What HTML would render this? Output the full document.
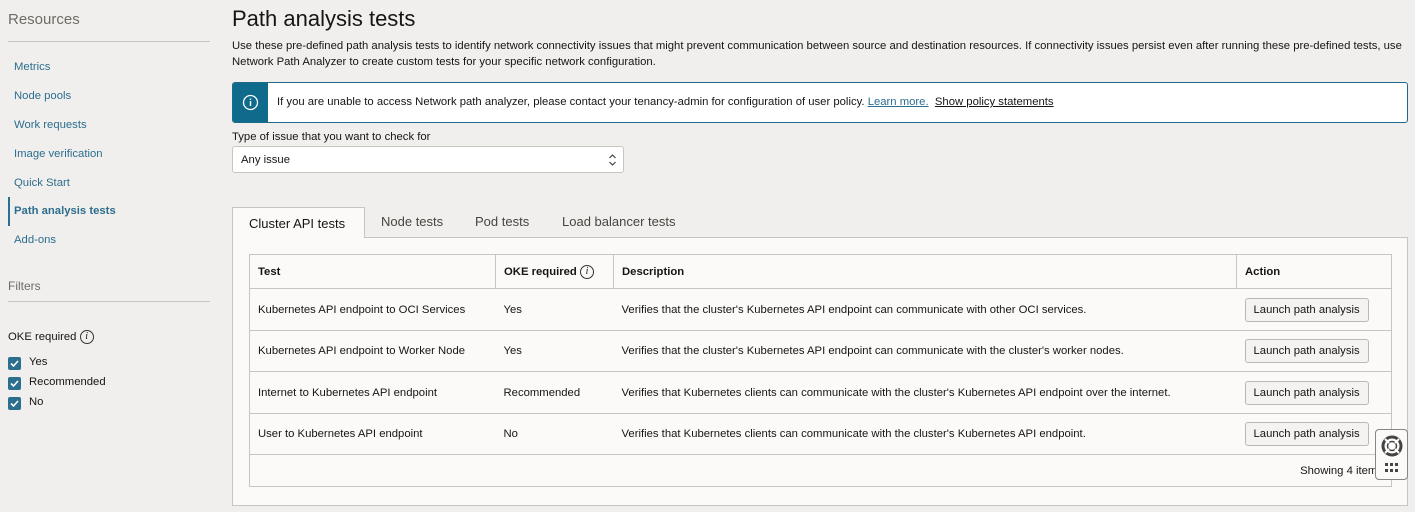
<!DOCTYPE html>
<html><head><style>
*{box-sizing:border-box;margin:0;padding:0}
body{width:1415px;height:512px;overflow:hidden;background:#f1efed;font-family:"Liberation Sans",sans-serif;color:#161513;position:relative;font-size:11.3px}
.a{position:absolute}
.nav a{position:absolute;left:14px;color:#2c6e8e;font-size:11.3px;text-decoration:none}
.cb{position:absolute;left:8px;width:13px;height:13px;background:#2c6e8e;border-radius:2px}
.cb svg{position:absolute;left:1px;top:1px}
table{border-collapse:collapse;position:absolute;left:249px;top:254px;width:1143px;background:#fbfaf9;border:1px solid #c8c4bf}
td,th{border-bottom:1px solid #c8c4bf;text-align:left;padding:1px 8px 0;font-size:11.3px;vertical-align:middle}
th{height:34px;border-right:1px solid #c8c4bf;font-weight:bold}
td{height:41.5px}
.btn{display:inline-block;border:1px solid #bcb7b1;background:#f4f3f1;border-radius:3px;padding:5px 8px;font-size:11.3px}
.info{display:inline-block;width:14px;height:14px;border:1px solid #333;border-radius:50%;font-style:italic;font-family:"Liberation Serif",serif;font-size:10px;text-align:center;line-height:12px;vertical-align:middle}
</style></head><body>
<div class="a" style="left:8px;top:11px;font-size:15px;color:#6f6b66">Resources</div>
<div class="a" style="left:8px;top:41px;width:202px;height:1px;background:#c8c4bf"></div>
<div class="nav">
<a style="top:61px">Metrics</a><a style="top:90px">Node pools</a><a style="top:119px">Work requests</a><a style="top:148px">Image verification</a><a style="top:177px">Quick Start</a><a style="top:205px;font-weight:bold">Path analysis tests</a><a style="top:234px">Add-ons</a>
</div>
<div class="a" style="left:8px;top:197px;width:2px;height:29px;background:#2c6e8e"></div>
<div class="a" style="left:8px;top:279px;font-size:12px;color:#6f6b66">Filters</div>
<div class="a" style="left:8px;top:301px;width:202px;height:1px;background:#c8c4bf"></div>
<div class="a" style="left:8px;top:330px">OKE required <span class="info">i</span></div>
<div class="cb" style="top:357px"><svg width="11" height="11"><path d="M2 5.5l2.5 2.5 4.5-5" stroke="#fff" stroke-width="1.6" fill="none"/></svg></div>
<div class="a" style="left:29px;top:356px">Yes</div>
<div class="cb" style="top:377px"><svg width="11" height="11"><path d="M2 5.5l2.5 2.5 4.5-5" stroke="#fff" stroke-width="1.6" fill="none"/></svg></div>
<div class="a" style="left:29px;top:376px">Recommended</div>
<div class="cb" style="top:397px"><svg width="11" height="11"><path d="M2 5.5l2.5 2.5 4.5-5" stroke="#fff" stroke-width="1.6" fill="none"/></svg></div>
<div class="a" style="left:29px;top:396px">No</div>

<div class="a" style="left:232px;top:6px;font-size:22px;color:#161513">Path analysis tests</div>
<div class="a" style="left:232px;top:38px;width:1180px;line-height:16px">Use these pre-defined path analysis tests to identify network connectivity issues that might prevent communication between source and destination resources. If connectivity issues persist even after running these pre-defined tests, use Network Path Analyzer to create custom tests for your specific network configuration.</div>
<div class="a" style="left:232px;top:82px;width:1176px;height:41px;background:#fff;border:1px solid #1e6a8a;border-radius:3px;overflow:hidden">
<div class="a" style="left:0;top:0;width:35px;height:41px;background:#0f6a8c"></div>
<svg class="a" style="left:9px;top:11px" width="17" height="17"><circle cx="8.5" cy="8.5" r="7" stroke="#fff" stroke-width="1.3" fill="none"/><rect x="7.8" y="7" width="1.4" height="5" fill="#fff"/><rect x="7.8" y="4.5" width="1.4" height="1.4" fill="#fff"/></svg>
<div class="a" style="left:44px;top:13px">If you are unable to access Network path analyzer, please contact your tenancy-admin for configuration of user policy. <u style="color:#2c6e8e">Learn more.</u>&nbsp; <u>Show policy statements</u></div>
</div>
<div class="a" style="left:232px;top:131px">Type of issue that you want to check for</div>
<div class="a" style="left:232px;top:146px;width:392px;height:27px;background:#fff;border:1px solid #c8c4bf;border-radius:3px;padding:7px 8px">Any issue
<svg class="a" style="right:6px;top:6px" width="9" height="14"><path d="M1.5 5l3-3 3 3M1.5 9l3 3 3-3" stroke="#333" stroke-width="1.1" fill="none"/></svg></div>

<div class="a" style="left:232px;top:237px;width:1176px;height:269px;background:#fbfaf9;border:1px solid #c8c4bf"></div>
<div class="a" style="left:232px;top:207px;width:133px;height:31px;background:#fbfaf9;border:1px solid #c8c4bf;border-bottom:none;font-size:13px;padding:8px 0 0 16px">Cluster API tests</div>
<div class="a" style="left:381px;top:214px;font-size:13px;color:#48443f">Node tests</div>
<div class="a" style="left:475px;top:214px;font-size:13px;color:#48443f">Pod tests</div>
<div class="a" style="left:562px;top:214px;font-size:13px;color:#48443f">Load balancer tests</div>

<table>
<tr><th style="width:246px">Test</th><th style="width:118px">OKE required <span class="info" style="font-weight:normal">i</span></th><th style="width:623px">Description</th><th style="border-right:none">Action</th></tr>
<tr><td>Kubernetes API endpoint to OCI Services</td><td>Yes</td><td>Verifies that the cluster's Kubernetes API endpoint can communicate with other OCI services.</td><td><span class="btn">Launch path analysis</span></td></tr>
<tr><td>Kubernetes API endpoint to Worker Node</td><td>Yes</td><td>Verifies that the cluster's Kubernetes API endpoint can communicate with the cluster's worker nodes.</td><td><span class="btn">Launch path analysis</span></td></tr>
<tr><td>Internet to Kubernetes API endpoint</td><td>Recommended</td><td>Verifies that Kubernetes clients can communicate with the cluster's Kubernetes API endpoint over the internet.</td><td><span class="btn">Launch path analysis</span></td></tr>
<tr><td>User to Kubernetes API endpoint</td><td>No</td><td>Verifies that Kubernetes clients can communicate with the cluster's Kubernetes API endpoint.</td><td><span class="btn">Launch path analysis</span></td></tr>
<tr><td colspan="4" style="height:32px;border-bottom:none;text-align:right;padding-right:8px">Showing 4 items</td></tr>
</table>
<div class="a" style="left:1375px;top:429px;width:33px;height:51px;background:#fbfaf9;border:1px solid #8a857f;border-radius:4px">
<svg class="a" style="left:4px;top:4px" width="24" height="24"><circle cx="12" cy="12" r="9" stroke="#444" stroke-width="3" fill="none"/><circle cx="12" cy="12" r="4.5" stroke="#444" stroke-width="1.5" fill="#fff"/><path d="M5 5l4 4M19 5l-4 4M5 19l4-4M19 19l-4-4" stroke="#fff" stroke-width="2"/></svg>
<svg class="a" style="left:9px;top:33px" width="14" height="10"><g fill="#444"><rect x="0" y="0" width="3" height="3"/><rect x="5" y="0" width="3" height="3"/><rect x="10" y="0" width="3" height="3"/><rect x="0" y="6" width="3" height="3"/><rect x="5" y="6" width="3" height="3"/><rect x="10" y="6" width="3" height="3"/></g></svg>
</div>
</body></html>
